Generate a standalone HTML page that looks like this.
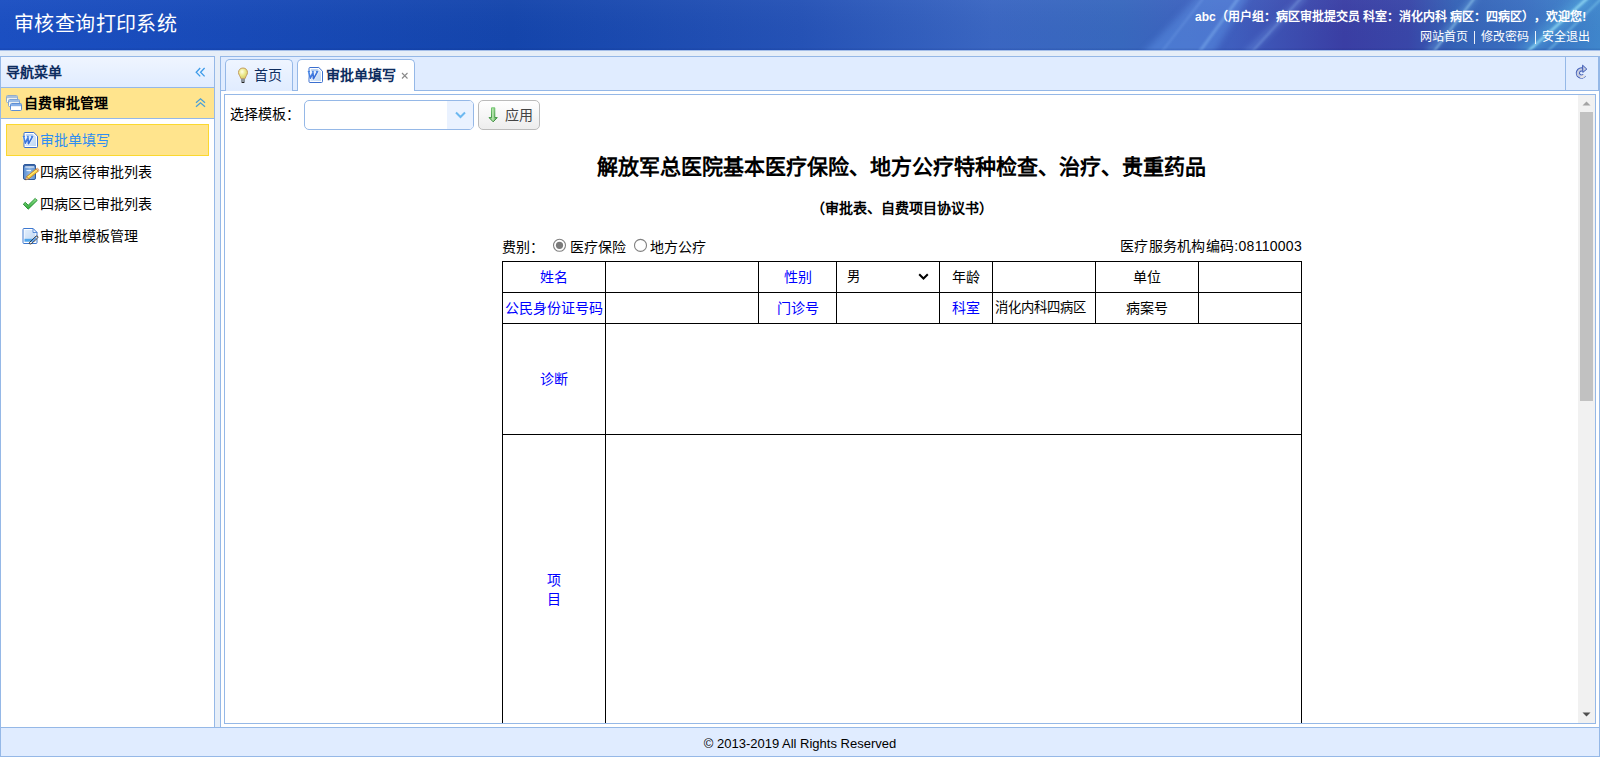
<!DOCTYPE html>
<html lang="zh-CN"><head><meta charset="utf-8">
<style>
*{box-sizing:border-box;margin:0;padding:0}
html,body{text-spacing-trim:space-all;width:1600px;height:757px;overflow:hidden;background:#E6EEF8;font-family:"Liberation Sans",sans-serif;font-size:14px;color:#000}
.abs{position:absolute}
svg{position:absolute;display:block;overflow:visible}
#hdr{left:0;top:0;width:1600px;height:50px;background:#1448BE;overflow:hidden}
#west{left:0;top:56px;width:215px;height:672px;border:1px solid #95B8E7;background:#fff}
#center{left:220px;top:56px;width:1380px;height:672px;border:1px solid #95B8E7;background:#fff}
#foot{left:0;top:727px;width:1600px;height:30px;border:1px solid #95B8E7;background:#E0ECFF}
.t{position:absolute;white-space:nowrap;line-height:20px}
.b{color:#0000FF}
.bd{position:absolute;background:#000}
</style></head><body>
<!-- HEADER -->
<div id="hdr" class="abs">
  <svg width="1600" height="50" style="left:0;top:0">
    <defs>
      <linearGradient id="hg" x1="0" y1="0" x2="1" y2="0">
        <stop offset="0" stop-color="#1B4FC2"/>
        <stop offset="0.15" stop-color="#184AB8"/>
        <stop offset="0.32" stop-color="#1445AC"/>
        <stop offset="0.5" stop-color="#2552B6"/>
        <stop offset="0.62" stop-color="#3A66C2"/>
        <stop offset="0.7" stop-color="#3868BE"/>
        <stop offset="0.77" stop-color="#3F5EBE"/>
        <stop offset="0.84" stop-color="#3A3EA4"/>
        <stop offset="0.88" stop-color="#3946A8"/>
        <stop offset="0.91" stop-color="#3462B6"/>
        <stop offset="0.95" stop-color="#3A6EC0"/>
        <stop offset="1" stop-color="#3F86CC"/>
      </linearGradient>
      <linearGradient id="hv" x1="0" y1="0" x2="0" y2="1">
        <stop offset="0" stop-color="#fff" stop-opacity="0.03"/>
        <stop offset="0.96" stop-color="#000" stop-opacity="0"/>
        <stop offset="1" stop-color="#0030B8" stop-opacity="0.18"/>
      </linearGradient>
      <filter id="bl" x="-50%" y="-50%" width="200%" height="200%"><feGaussianBlur stdDeviation="1.2"/></filter>
      <filter id="bl3" x="-50%" y="-50%" width="200%" height="200%"><feGaussianBlur stdDeviation="3"/></filter>
      <filter id="bl2" x="-50%" y="-50%" width="200%" height="200%"><feGaussianBlur stdDeviation="6"/></filter>
    </defs>
    <rect width="1600" height="50" fill="url(#hg)"/>
    <path d="M1140 56 L1212 56 L1250 -6 L1200 -6Z" fill="#5C90E4" opacity="0.5" filter="url(#bl3)"/>
    <path d="M1198 54 L1240 -4" stroke="#86B8F4" stroke-width="3" fill="none" opacity="0.45" filter="url(#bl)"/>
    <path d="M1160 54 L1205 -4" stroke="#7AA8EE" stroke-width="2" fill="none" opacity="0.35" filter="url(#bl)"/>
    <path d="M1246 54 L1305 -4" stroke="#78A6EE" stroke-width="5" fill="none" opacity="0.4" filter="url(#bl3)"/>
    <path d="M1250 54 L1303 -4" stroke="#9CC4F6" stroke-width="1.5" fill="none" opacity="0.4" filter="url(#bl)"/>
    <path d="M1428 54 L1476 -4" stroke="#7CC0F0" stroke-width="6" fill="none" opacity="0.35" filter="url(#bl3)"/>
    <path d="M1432 54 L1476 -4" stroke="#A8E0FA" stroke-width="1.6" fill="none" opacity="0.65" filter="url(#bl)"/>
    <path d="M1522 54 L1590 -4" stroke="#66D0F4" stroke-width="10" fill="none" opacity="0.4" filter="url(#bl2)"/>
    <path d="M1525 54 L1590 -4" stroke="#A6F0FF" stroke-width="2.4" fill="none" opacity="0.7" filter="url(#bl)"/>
    <path d="M1545 54 L1604 -4" stroke="#90E0FA" stroke-width="1.8" fill="none" opacity="0.5" filter="url(#bl)"/>
    <rect width="1600" height="50" fill="url(#hv)"/>
  </svg>
  <div class="t" style="left:14px;top:12px;font-size:20px;color:#fff;line-height:24px;letter-spacing:0.4px">审核查询打印系统</div>
  <div class="t" style="left:1195px;top:8px;font-size:12px;color:#fff;font-weight:bold;line-height:18px">abc（用户组：病区审批提交员 科室：消化内科 病区：四病区），欢迎您!</div>
  <div class="t" style="left:1420px;top:28px;font-size:12px;color:#fff;line-height:18px">网站首页</div>
  <div class="abs" style="left:1474px;top:31px;width:1px;height:13px;background:#fff;opacity:0.9"></div>
  <div class="t" style="left:1481px;top:28px;font-size:12px;color:#fff;line-height:18px">修改密码</div>
  <div class="abs" style="left:1535px;top:31px;width:1px;height:13px;background:#fff;opacity:0.9"></div>
  <div class="t" style="left:1542px;top:28px;font-size:12px;color:#fff;line-height:18px">安全退出</div>
</div>

<div class="abs" style="left:0;top:50px;width:1600px;height:1px;background:#A4BEE8"></div>
<!-- WEST -->
<div id="west" class="abs">
  <div class="abs" style="left:0;top:0;width:213px;height:31px;background:linear-gradient(#EFF5FF,#E0ECFF);border-bottom:1px solid #95B8E7"></div>
  <div class="t" style="left:5px;top:5px;font-weight:bold;color:#0E2D5F">导航菜单</div>
  <svg width="12" height="12" style="left:194px;top:10px"><path d="M5.2 1 L1.2 5.2 L5.2 9.4 M9.6 1 L5.6 5.2 L9.6 9.4" stroke="#3D9BE9" stroke-width="1.3" fill="none"/></svg>
  <div class="abs" style="left:0;top:31px;width:213px;height:31px;background:#FFE48D;border-bottom:1px solid #95B8E7"></div>
  <svg width="16" height="16" style="left:5px;top:38px">
    <rect x="0.5" y="0.5" width="11" height="7" rx="1" fill="#FFFCF0" stroke="#90ACCC"/><rect x="1" y="1" width="10" height="2.2" fill="#A9C0DA"/>
    <rect x="2.5" y="4.5" width="11" height="7" rx="1" fill="#FFFCF0" stroke="#7FA4D6"/><rect x="3" y="5" width="10" height="2.2" fill="#9CBDE6"/>
    <rect x="4.5" y="8.5" width="11" height="7" rx="1" fill="#fff" stroke="#5E8ED2"/><rect x="5" y="9" width="10" height="2.2" fill="#86B0EA"/>
  </svg>
  <div class="t" style="left:23px;top:36px;font-weight:bold">自费审批管理</div>
  <svg width="12" height="12" style="left:194px;top:41px"><path d="M1 4.8 L5.5 0.8 L10 4.8 M1 8.8 L5.5 4.8 L10 8.8" stroke="#4A9FD8" stroke-width="1.3" fill="none"/></svg>
  <div class="abs" style="left:5px;top:67px;width:203px;height:32px;background:#FFE48D;border:1px solid #FBD82F"></div>
  <svg width="16" height="16" style="left:21px;top:75px"><defs><linearGradient id="wdfa" x1="0" y1="0" x2="1" y2="1"><stop offset="0" stop-color="#E4EFFC"/><stop offset="1" stop-color="#C2D9F4"/></linearGradient>
<linearGradient id="wdwa" x1="0" y1="0" x2="1" y2="1"><stop offset="0" stop-color="#4F8EEA"/><stop offset="1" stop-color="#2A5FD0"/></linearGradient></defs>
    <path d="M3 0.5 H11.8 L15.5 4.2 V14.5 Q15.5 15.5 14.5 15.5 H3 Q2 15.5 2 14.5 V1.5 Q2 0.5 3 0.5Z" fill="#fff" stroke="#3B6FCF"/>
    <path d="M3.5 2 H11.2 L14 4.8 V14 H3.5Z" fill="url(#wdfa)"/>
    <rect x="4.2" y="2.3" width="6.6" height="1.5" fill="#AFCBF0"/>
    <path d="M1.6 4.4 L3.3 11.2 L6 5.6 L6.4 11.8 L10.6 4.4" stroke="#fff" stroke-width="2.8" fill="none" stroke-opacity="0.6" stroke-linejoin="round"/>
    <path d="M1.6 4.4 L3.3 11.2 L6 5.6 L6.4 11.8 L10.6 4.4" stroke="url(#wdwa)" stroke-width="1.6" fill="none" stroke-linejoin="round"/>
    <path d="M0.8 4.4 H3 M5 4.4 H6.8 M9 4.4 H11.2" stroke="#3E7EE0" stroke-width="1"/></svg>
  <div class="t" style="left:39px;top:73px;color:#2F8EF2">审批单填写</div>
  <svg width="16" height="16" style="left:21px;top:107px">
    <defs><linearGradient id="nbf" x1="0" y1="0" x2="1" y2="0"><stop offset="0" stop-color="#5C8ED0"/><stop offset="0.5" stop-color="#8DB6E6"/><stop offset="1" stop-color="#5F90CE"/></linearGradient></defs>
    <rect x="1.5" y="0.5" width="12" height="15" rx="1.5" fill="url(#nbf)" stroke="#2F5A9C"/>
    <rect x="2" y="1" width="11" height="1.6" fill="#3A66A8"/>
    <rect x="3.2" y="2.4" width="9" height="1.1" fill="#F4F8FD"/>
    <rect x="4.5" y="6" width="4.5" height="1.1" fill="#EAF2FB"/>
    <path d="M4.5 12.7 L14.2 4.9 L16.2 7.3 L6.5 15.1Z" fill="#F6D23C" stroke="#C47A22" stroke-width="0.8"/>
    <path d="M5.6 13.2 L15 5.8" stroke="#FFF2A0" stroke-width="0.8"/>
    <path d="M4.5 12.7 L6.5 15.1 L3.4 16Z" fill="#F2CDA4" stroke="#B07030" stroke-width="0.5"/>
    <path d="M3.4 16 L4.2 15.2" stroke="#333" stroke-width="1"/>
    <path d="M14.2 4.9 L16.2 7.3 L16.9 6.6 Q17 5 15.6 4.3Z" fill="#F4C0B0" stroke="#C47A22" stroke-width="0.6"/>
  </svg>
  <div class="t" style="left:39px;top:105px">四病区待审批列表</div>
  <svg width="16" height="16" style="left:21px;top:139px">
    <defs><linearGradient id="ckf" x1="0" y1="0" x2="0" y2="1"><stop offset="0" stop-color="#8EE08A"/><stop offset="1" stop-color="#2FA83A"/></linearGradient></defs>
    <path d="M1.3 8.2 L3.3 6.3 L6.2 9.2 L13.2 2.4 L15.2 4.4 L6.2 13.2Z" fill="url(#ckf)" stroke="#1E8A2A" stroke-width="0.9" stroke-linejoin="round"/>
  </svg>
  <div class="t" style="left:39px;top:137px">四病区已审批列表</div>
  <svg width="16" height="16" style="left:21px;top:171px">
    <defs><linearGradient id="dpf" x1="0" y1="0" x2="1" y2="1"><stop offset="0" stop-color="#E2EEFC"/><stop offset="1" stop-color="#BDD6F3"/></linearGradient></defs>
    <path d="M2 0.5 H11 L15 4.5 V14.5 Q15 15.5 14 15.5 H2 Q1 15.5 1 14.5 V1.5 Q1 0.5 2 0.5Z" fill="#fff" stroke="#3D78D0"/>
    <rect x="2.5" y="2" width="10.8" height="12" fill="url(#dpf)"/>
    <path d="M11 0.5 V4.5 H15Z" fill="#F2F7FD" stroke="#3D78D0" stroke-width="0.8"/>
    <rect x="2.5" y="10.8" width="9" height="2.8" fill="#4FA6EC"/>
    <path d="M7.8 14.2 L14 8.2 Q15.2 7.6 15.8 8.6 Q16.2 9.6 15.2 10.4 L9.2 15.8 Q7.4 16.6 7.2 15.2Z" fill="#fff" stroke="#222" stroke-width="0.9"/>
    <path d="M9.4 14 L14.2 9.4" stroke="#3D8EEA" stroke-width="1.3"/>
  </svg>
  <div class="t" style="left:39px;top:169px">审批单模板管理</div>
</div>

<!-- CENTER -->
<div id="center" class="abs">
  <div class="abs" style="left:0;top:0;width:1378px;height:34px;background:#E0ECFF;border-bottom:1px solid #95B8E7"></div>
  <div class="abs" style="left:4px;top:2px;width:68px;height:32px;border:1px solid #95B8E7;border-bottom:0;border-radius:5px 5px 0 0;background:linear-gradient(#EFF5FF,#E0ECFF)"></div>
  <svg width="16" height="16" style="left:14px;top:10px">
    <defs><radialGradient id="bulb" cx="0.4" cy="0.35" r="0.65"><stop offset="0" stop-color="#FFFFE6"/><stop offset="0.55" stop-color="#ECE88A"/><stop offset="1" stop-color="#D6CC66"/></radialGradient></defs>
    <path d="M8 1 C5.2 1 3.5 3 3.5 5.5 C3.5 7.6 5.2 9 5.9 11.6 H10.1 C10.8 9 12.5 7.6 12.5 5.5 C12.5 3 10.8 1 8 1Z" fill="url(#bulb)" stroke="#BE9456" stroke-width="0.9"/>
    <rect x="6" y="11.8" width="4" height="3.2" fill="#8C949C"/>
    <rect x="6.6" y="15" width="2.8" height="1" fill="#222"/>
  </svg>
  <div class="t" style="left:33px;top:8px;color:#0E2D5F">首页</div>
  <div class="abs" style="left:76px;top:2px;width:118px;height:32px;border:1px solid #95B8E7;border-bottom:0;border-radius:5px 5px 0 0;background:#fff"></div>
  <svg width="16" height="16" style="left:86px;top:10px"><defs><linearGradient id="wdfb" x1="0" y1="0" x2="1" y2="1"><stop offset="0" stop-color="#E4EFFC"/><stop offset="1" stop-color="#C2D9F4"/></linearGradient>
<linearGradient id="wdwb" x1="0" y1="0" x2="1" y2="1"><stop offset="0" stop-color="#4F8EEA"/><stop offset="1" stop-color="#2A5FD0"/></linearGradient></defs>
    <path d="M3 0.5 H11.8 L15.5 4.2 V14.5 Q15.5 15.5 14.5 15.5 H3 Q2 15.5 2 14.5 V1.5 Q2 0.5 3 0.5Z" fill="#fff" stroke="#3B6FCF"/>
    <path d="M3.5 2 H11.2 L14 4.8 V14 H3.5Z" fill="url(#wdfb)"/>
    <rect x="4.2" y="2.3" width="6.6" height="1.5" fill="#AFCBF0"/>
    <path d="M1.6 4.4 L3.3 11.2 L6 5.6 L6.4 11.8 L10.6 4.4" stroke="#fff" stroke-width="2.8" fill="none" stroke-opacity="0.6" stroke-linejoin="round"/>
    <path d="M1.6 4.4 L3.3 11.2 L6 5.6 L6.4 11.8 L10.6 4.4" stroke="url(#wdwb)" stroke-width="1.6" fill="none" stroke-linejoin="round"/>
    <path d="M0.8 4.4 H3 M5 4.4 H6.8 M9 4.4 H11.2" stroke="#3E7EE0" stroke-width="1"/></svg>
  <div class="t" style="left:105px;top:8px;color:#0E2D5F;font-weight:bold">审批单填写</div>
  <svg width="8" height="8" style="left:180px;top:15px"><path d="M1 1 L6.5 6.5 M6.5 1 L1 6.5" stroke="#8A8A8A" stroke-width="1.1"/></svg>
  <div class="abs" style="left:1344px;top:0;width:34px;height:34px;border-left:1px solid #95B8E7"></div>
  <div class="abs" style="left:1377px;top:0;width:1px;height:34px;background:#95B8E7"></div>
  <svg width="16" height="16" style="left:1353px;top:6px">
    <path d="M10.3 12.3 A3.6 3.6 0 1 1 8.8 6.7" stroke="#3A58B5" stroke-width="4.2" fill="none"/>
    <path d="M10.3 12.3 A3.6 3.6 0 1 1 8.8 6.7" stroke="#C6CCE0" stroke-width="2.3" fill="none"/>
    <path d="M10.6 12 A3.6 3.6 0 0 1 6.5 13.8" stroke="#E4E4E8" stroke-width="2.3" fill="none"/>
    <path d="M8.6 2.2 L12.8 6.1 L8.8 9.4Z" fill="#C6CCE0" stroke="#3A58B5" stroke-width="1" stroke-linejoin="round"/>
  </svg>
  <!-- tab panel body -->
  <div class="abs" style="left:3px;top:37px;width:1372px;height:630px;border:1px solid #95B8E7;background:#fff;overflow:hidden">
    <!-- scrollbar -->
    <div class="abs" style="left:1353px;top:0;width:17px;height:628px;background:#F1F1F1"></div>
    <div class="abs" style="left:1355px;top:17px;width:13px;height:289px;background:#C1C1C1"></div>
    <svg width="17" height="17" style="left:1353px;top:0"><path d="M4.5 10.5 L8.5 6.5 L12.5 10.5Z" fill="#A3A3A3"/></svg>
    <svg width="17" height="17" style="left:1353px;top:611px"><path d="M4.5 6.5 L12.5 6.5 L8.5 10.5Z" fill="#505050"/></svg>
    <div class="t" style="left:5px;top:9px">选择模板：</div>
    <div class="abs" style="left:79px;top:5px;width:170px;height:30px;border:1px solid #95B8E7;border-radius:5px;background:#fff;overflow:hidden">
      <div class="abs" style="left:142px;top:0;width:26px;height:28px;background:#EAF2FF"></div>
      <svg width="12" height="8" style="left:150px;top:10px"><path d="M1 1.5 L5.5 6 L10 1.5" stroke="#6CB8F0" stroke-width="2" fill="none"/></svg>
    </div>
    <div class="abs" style="left:253px;top:5px;width:62px;height:30px;border:1px solid #BBBBBB;border-radius:5px;background:linear-gradient(#ffffff,#EDEDED)"></div>
    <svg width="16" height="16" style="left:260px;top:12px">
      <defs><linearGradient id="ga" x1="0" y1="0" x2="1" y2="0"><stop offset="0" stop-color="#5DBA5D"/><stop offset="0.45" stop-color="#B6E6AE"/><stop offset="1" stop-color="#3C9A3C"/></linearGradient>
      <linearGradient id="gb" x1="0" y1="0" x2="0" y2="1"><stop offset="0" stop-color="#6CC46A"/><stop offset="1" stop-color="#1F7A22"/></linearGradient></defs>
      <path d="M6.5 0.8 H9.8 V10.6 H12.3 L8.15 14.8 L4 10.6 H6.5Z" fill="url(#ga)" stroke="url(#gb)" stroke-width="0.9" stroke-linejoin="round"/>
    </svg>
    <div class="t" style="left:280px;top:10px;color:#444">应用</div>

    <div class="t" style="left:0;width:1353px;text-align:center;top:57px;font-size:21px;font-weight:bold;line-height:30px">解放军总医院基本医疗保险、地方公疗特种检查、治疗、贵重药品</div>
    <div class="t" style="left:0;width:1353px;text-align:center;top:103px;font-weight:bold">（审批表、自费项目协议书）</div>

    <div class="t" style="left:277px;top:142px">费别：</div>
    <svg width="14" height="14" style="left:327px;top:143px"><circle cx="7.5" cy="7.3" r="6" fill="#fff" stroke="#808080" stroke-width="1.1"/><circle cx="7.5" cy="7.3" r="3.6" fill="#7A7A7A"/></svg>
    <div class="t" style="left:345px;top:142px">医疗保险</div>
    <svg width="14" height="14" style="left:408px;top:143px"><circle cx="7.5" cy="7.4" r="6" fill="#fff" stroke="#808080" stroke-width="1.1"/></svg>
    <div class="t" style="left:425px;top:142px">地方公疗</div>
    <div class="t" style="left:857px;width:220px;text-align:right;top:141px;letter-spacing:0.28px">医疗服务机构编码:08110003</div>

    <!-- table lines -->
    <div class="bd" style="left:277px;top:166px;width:800px;height:1px"></div>
    <div class="bd" style="left:277px;top:197px;width:800px;height:1px"></div>
    <div class="bd" style="left:277px;top:228px;width:800px;height:1px"></div>
    <div class="bd" style="left:277px;top:339px;width:800px;height:1px"></div>
    <div class="bd" style="left:277px;top:166px;width:1px;height:520px"></div>
    <div class="bd" style="left:380px;top:166px;width:1px;height:520px"></div>
    <div class="bd" style="left:1076px;top:166px;width:1px;height:520px"></div>
    <div class="bd" style="left:533px;top:166px;width:1px;height:62px"></div>
    <div class="bd" style="left:611px;top:166px;width:1px;height:62px"></div>
    <div class="bd" style="left:714px;top:166px;width:1px;height:62px"></div>
    <div class="bd" style="left:767px;top:166px;width:1px;height:62px"></div>
    <div class="bd" style="left:870px;top:166px;width:1px;height:62px"></div>
    <div class="bd" style="left:973px;top:166px;width:1px;height:62px"></div>

    <div class="t b" style="left:278px;width:102px;text-align:center;top:172px">姓名</div>
    <div class="t b" style="left:534px;width:77px;text-align:center;top:172px">性别</div>
    <div class="t" style="left:622px;top:172px;font-size:13.33px">男</div>
    <svg width="12" height="8" style="left:693px;top:178px"><path d="M1.2 1.2 L5.5 5.5 L9.8 1.2" stroke="#000" stroke-width="2" fill="none"/></svg>
    <div class="t" style="left:715px;width:52px;text-align:center;top:172px">年龄</div>
    <div class="t" style="left:871px;width:102px;text-align:center;top:172px">单位</div>

    <div class="t b" style="left:278px;width:102px;text-align:center;top:203px">公民身份证号码</div>
    <div class="t b" style="left:534px;width:77px;text-align:center;top:203px">门诊号</div>
    <div class="t b" style="left:715px;width:52px;text-align:center;top:203px">科室</div>
    <div class="t" style="left:770px;top:203px;font-size:13.33px">消化内科四病区</div>
    <div class="t" style="left:871px;width:102px;text-align:center;top:203px">病案号</div>

    <div class="t b" style="left:278px;width:102px;text-align:center;top:274px">诊断</div>
    <div class="t b" style="left:278px;width:102px;text-align:center;top:476px;line-height:19px">项<br>目</div>
  </div>
</div>

<!-- FOOTER -->
<div id="foot" class="abs">
  <div class="t" style="left:0;width:1598px;text-align:center;top:6px;font-size:13px">© 2013-2019 All Rights Reserved</div>
</div>
</body></html>
